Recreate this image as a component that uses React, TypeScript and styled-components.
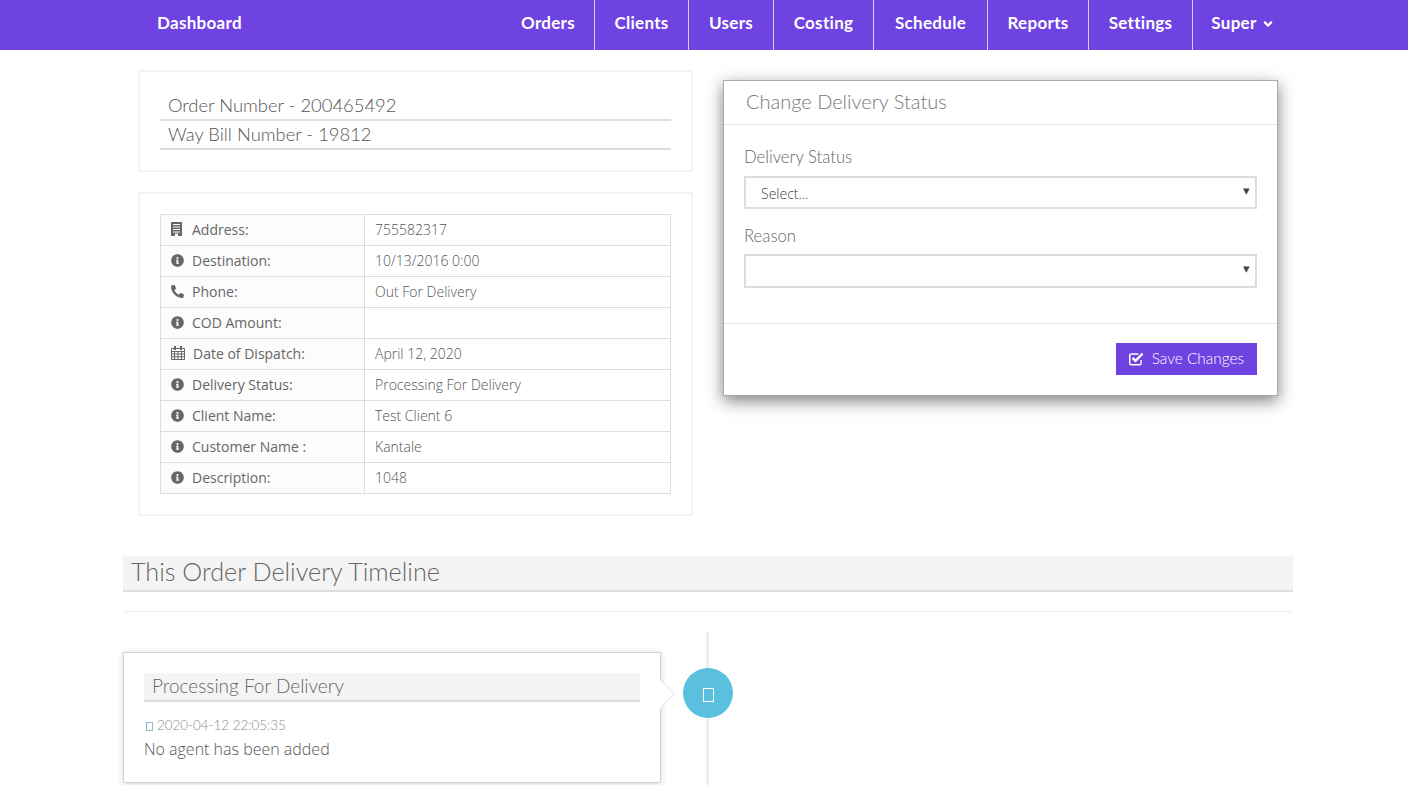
import React from "react"
import styled, { createGlobalStyle } from "styled-components"
import { FaAngleDown, FaInfoCircle, FaPhoneAlt } from "react-icons/fa"

const heading = `"Lato", "Open Sans", sans-serif`
const body = `"Open Sans", "Noto Sans", sans-serif`

const BuildingIcon = () => (
	<svg width="11" height="14" viewBox="0 0 11 14">
		<path
			fill="currentColor"
			fillRule="evenodd"
			d="M0 0h11v14H0zM2 2v1h7V2zM2 4.5v1h7v-1zM2 7v1h7V7zM2 9.5v1h7v-1zM4 11.5V14h3v-2.5z"
		/>
	</svg>
)

const CalendarIcon = () => (
	<svg width="14" height="14" viewBox="0 0 14 14">
		<path
			fill="none"
			stroke="currentColor"
			strokeWidth="1"
			d="M.5 2.5h13v11H.5zM.5 5.5h13M.5 8h13M.5 10.75h13M3.5 5.5v8M7 5.5v8M10.5 5.5v8"
		/>
		<path fill="currentColor" d="M3 0h2v4H3zM9 0h2v4H9z" />
	</svg>
)

const CheckSquareIcon = () => (
	<svg width="16" height="14" viewBox="0 0 15 13">
		<path
			fill="none"
			stroke="currentColor"
			strokeWidth="1.4"
			d="M11.5 7.5v3a1.5 1.5 0 0 1-1.5 1.5H2.2A1.5 1.5 0 0 1 .7 10.5V3.2a1.5 1.5 0 0 1 1.5-1.5H9"
		/>
		<path fill="none" stroke="currentColor" strokeWidth="2.2" d="M3.4 5.4l2.8 2.8 6.8-6.8" />
	</svg>
)

const navItems = [
	{ label: "Orders", width: 93 },
	{ label: "Clients", width: 94 },
	{ label: "Users", width: 85 },
	{ label: "Costing", width: 100 },
	{ label: "Schedule", width: 114 },
	{ label: "Reports", width: 101 },
	{ label: "Settings", width: 104 },
]

const details = [
	{ icon: <BuildingIcon />, label: "Address:", value: "755582317" },
	{ icon: <FaInfoCircle />, label: "Destination:", value: "10/13/2016 0:00" },
	{ icon: <FaPhoneAlt />, label: "Phone:", value: "Out For Delivery" },
	{ icon: <FaInfoCircle />, label: "COD Amount:", value: "" },
	{ icon: <CalendarIcon />, label: "Date of Dispatch:", value: "April 12, 2020", wide: true },
	{ icon: <FaInfoCircle />, label: "Delivery Status:", value: "Processing For Delivery" },
	{ icon: <FaInfoCircle />, label: "Client Name:", value: "Test Client 6" },
	{ icon: <FaInfoCircle />, label: "Customer Name :", value: "Kantale" },
	{ icon: <FaInfoCircle />, label: "Description:", value: "1048" },
]

const App: React.FC = () => {
	return (
		<Page>
			<GlobalStyle />
			<NavBar>
				<NavInner>
					<Brand>Dashboard</Brand>
					<NavList>
						{navItems.map((item) => (
							<NavItem key={item.label} $width={item.width}>
								{item.label}
							</NavItem>
						))}
						<NavItem $width={100} $last>
							Super <FaAngleDown size={14} />
						</NavItem>
					</NavList>
				</NavInner>
			</NavBar>

			<Container>
				<Columns>
					<LeftColumn>
						<Box>
							<NumberLine>Order Number - 200465492</NumberLine>
							<NumberLine>Way Bill Number - 19812</NumberLine>
						</Box>
						<TableBox>
							<DetailTable>
								<tbody>
									{details.map((row) => (
										<tr key={row.label}>
											<LabelCell>
												<CellIcon $wide={row.wide}>{row.icon}</CellIcon>
												{row.label}
											</LabelCell>
											<ValueCell>{row.value}</ValueCell>
										</tr>
									))}
								</tbody>
							</DetailTable>
						</TableBox>
					</LeftColumn>

					<RightColumn>
						<Modal>
							<ModalHeader>Change Delivery Status</ModalHeader>
							<ModalBody>
								<FieldLabel>Delivery Status</FieldLabel>
								<SelectWrap>
									<Select defaultValue="">
										<option value="">Select...</option>
									</Select>
									<Caret>▾</Caret>
								</SelectWrap>
								<FieldLabel $short>Reason</FieldLabel>
								<SelectWrap $tall>
									<Select defaultValue="">
										<option value=""></option>
									</Select>
									<Caret>▾</Caret>
								</SelectWrap>
							</ModalBody>
							<ModalFooter>
								<SaveButton>
									<CheckSquareIcon />
									<span>Save Changes</span>
								</SaveButton>
							</ModalFooter>
						</Modal>
					</RightColumn>
				</Columns>

				<SectionTitle>This Order Delivery Timeline</SectionTitle>
				<Divider />

				<Timeline>
					<TimelineLine />
					<TimelineCard>
						<CardTitle>Processing For Delivery</CardTitle>
						<CardDate>
							<DateGlyph />
							2020-04-12 22:05:35
						</CardDate>
						<CardText>No agent has been added</CardText>
					</TimelineCard>
					<Badge>
						<BadgeGlyph />
					</Badge>
				</Timeline>
			</Container>
		</Page>
	)
}

const GlobalStyle = createGlobalStyle`
	html, body {
		margin: 0;
		padding: 0;
		background: #fff;
		overflow: hidden;
	}
	* {
		box-sizing: border-box;
	}
`

const Page = styled.div`
	height: 785px;
	overflow: hidden;
	font-family: ${body};
	font-size: 14px;
	color: #666;
`

const NavBar = styled.nav`
	height: 50px;
	background: #6f42e2;
`

const NavInner = styled.div`
	width: 1170px;
	margin-left: 123px;
	height: 100%;
	display: flex;
	justify-content: space-between;
	font-family: ${heading};
	font-weight: 700;
	font-size: 17px;
	letter-spacing: 0.3px;
	color: #fff;
`

const Brand = styled.div`
	padding-left: 34px;
	line-height: 46px;
`

const NavList = styled.div`
	display: flex;
`

const NavItem = styled.div<{ $width: number; $last?: boolean }>`
	width: ${(p) => p.$width}px;
	height: 50px;
	line-height: 46px;
	text-align: center;
	border-right: ${(p) => (p.$last ? "none" : "1px solid #d5cfe6")};

	svg {
		vertical-align: -2px;
	}
`

const Container = styled.main`
	width: 1170px;
	margin-left: 123px;
`

const Columns = styled.div`
	display: grid;
	grid-template-columns: 585px 585px;
	height: 506px;
`

const LeftColumn = styled.div`
	padding: 20px 15px 0;
	display: flex;
	flex-direction: column;
	gap: 20px;
`

const RightColumn = styled.div`
	padding: 30px 15px 0;
`

const Box = styled.div`
	border: 2px solid #f3f3f3;
	padding: 20px;
	height: 102px;
`

const TableBox = styled(Box)`
	height: 324px;
`

const NumberLine = styled.div`
	font-family: ${heading};
	font-size: 18.4px;
	font-weight: 300;
	line-height: 27px;
	padding: 0 8px;
	height: 29px;
	color: #555;
	border-bottom: 2px solid #ddd;
`

const DetailTable = styled.table`
	width: 511px;
	border-collapse: collapse;
	background: #fff;
	table-layout: fixed;

	tr {
		height: 31px;
	}
`

const LabelCell = styled.td`
	width: 204px;
	padding: 0 10px 2px;
	border: 1px solid #ddd;
	background: #fcfcfc;
	color: #666;
	white-space: nowrap;
`

const ValueCell = styled.td`
	padding: 0 10px 2px;
	border: 1px solid #ddd;
	font-weight: 300;
	color: #555;
	white-space: nowrap;
`

const CellIcon = styled.span<{ $wide?: boolean }>`
	display: inline-block;
	width: ${(p) => (p.$wide ? "22px" : "21px")};
	font-size: 13px;
	color: #666;

	svg {
		vertical-align: -1px;
	}
`

const Modal = styled.section`
	height: 316px;
	border: 1px solid #aaa;
	background: #fff;
	box-shadow: 0 5px 15px rgba(0, 0, 0, 0.5);
`

const ModalHeader = styled.div`
	height: 44px;
	padding-left: 22px;
	line-height: 41px;
	font-family: ${heading};
	font-weight: 300;
	font-size: 20px;
	color: #777;
	border-bottom: 1px solid #e5e5e5;
`

const ModalBody = styled.div`
	height: 199px;
	padding: 21px 20px 0;
	border-bottom: 1px solid #e5e5e5;
`

const FieldLabel = styled.div<{ $short?: boolean }>`
	font-family: ${heading};
	font-weight: 300;
	font-size: 16.7px;
	line-height: 22px;
	height: ${(p) => (p.$short ? "29px" : "30px")};
	color: #666;
`

const SelectWrap = styled.div<{ $tall?: boolean }>`
	position: relative;
	height: ${(p) => (p.$tall ? "34px" : "33px")};
	margin-bottom: 16px;
`

const Select = styled.select`
	width: 100%;
	height: 100%;
	padding: 2px 15px 0;
	appearance: none;
	background: #fff;
	border: 2px solid #ddd;
	border-radius: 0;
	font-family: ${body};
	font-size: 14px;
	font-weight: 300;
	color: #444;
`

const Caret = styled.span`
	position: absolute;
	right: 7px;
	top: 5px;
	font-size: 13px;
	color: #444;
	pointer-events: none;
`

const ModalFooter = styled.div`
	display: flex;
	justify-content: flex-end;
	padding: 19px 20px 0;
`

const SaveButton = styled.button`
	display: flex;
	align-items: center;
	gap: 7px;
	width: 141px;
	height: 32px;
	padding: 0 13px;
	border: none;
	background: #6f42e2;
	color: #fff;
	font-family: ${heading};
	font-weight: 300;
	font-size: 15.4px;
	white-space: nowrap;

	span {
		margin-bottom: 2px;
	}
`

const SectionTitle = styled.h2`
	margin: 0;
	height: 36px;
	padding-left: 8px;
	background: #f4f4f4;
	border-bottom: 2px solid #ddd;
	font-family: ${heading};
	font-weight: 300;
	font-size: 25.2px;
	line-height: 31px;
	color: #666;
`

const Divider = styled.hr`
	margin: 19px 0 20px;
	height: 1px;
	border: none;
	background: #eee;
`

const Timeline = styled.div`
	position: relative;
	display: flex;
	align-items: flex-start;
	height: 153px;
	padding-top: 20px;
`

const TimelineLine = styled.div`
	position: absolute;
	left: 583px;
	top: 0;
	bottom: 0;
	width: 3px;
	background: #eee;
`

const TimelineCard = styled.article`
	position: relative;
	width: 538px;
	height: 131px;
	padding: 20px;
	background: #fff;
	border: 1px solid #d4d4d4;
	border-radius: 2px;
	box-shadow: 0 1px 6px rgba(0, 0, 0, 0.175);

	&::before {
		content: "";
		position: absolute;
		top: 26px;
		right: -15px;
		border-top: 15px solid transparent;
		border-bottom: 15px solid transparent;
		border-left: 15px solid #ddd;
	}

	&::after {
		content: "";
		position: absolute;
		top: 27px;
		right: -14px;
		border-top: 14px solid transparent;
		border-bottom: 14px solid transparent;
		border-left: 14px solid #fff;
	}
`

const CardTitle = styled.h4`
	margin: 0;
	height: 29px;
	padding-left: 8px;
	background: #f4f4f4;
	border-bottom: 2px solid #ddd;
	font-family: ${heading};
	font-weight: 300;
	font-size: 19px;
	line-height: 26px;
	color: #666;
`

const CardDate = styled.div`
	margin-top: 13px;
	padding-left: 2px;
	font-family: ${heading};
	font-weight: 300;
	font-size: 13.4px;
	line-height: 20px;
	color: #888;
	white-space: nowrap;
`

const CardText = styled.div`
	margin-top: 2px;
	font-weight: 300;
	font-size: 16px;
	line-height: 24px;
	color: #555;
`

const DateGlyph = styled.span`
	display: inline-block;
	width: 7px;
	height: 9px;
	margin-right: 4px;
	vertical-align: -1px;
	border: 1px solid #8fb8c9;
`

const BadgeGlyph = styled.span`
	display: block;
	width: 11px;
	height: 14px;
	margin-top: 3px;
	border: 1px solid #fff;
`

const Badge = styled.div`
	position: relative;
	display: flex;
	align-items: center;
	justify-content: center;
	width: 50px;
	height: 50px;
	margin: 16px 0 0 22px;
	border-radius: 50%;
	background: #5bc0de;
`

export default App
